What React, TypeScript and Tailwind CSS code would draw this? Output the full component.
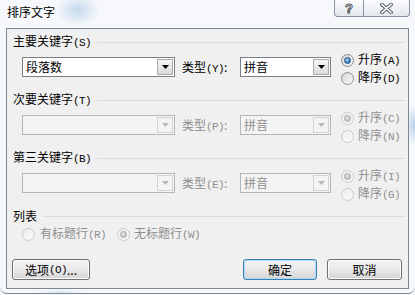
import React from "react";

const K = ({ k }: { k: string }) => (
  <span className="font-['Liberation_Mono',monospace] text-[11px] tracking-[-0.6px]">({k})</span>
);

function Radio({ checked, disabled }: { checked?: boolean; disabled?: boolean }) {
  return (
    <span
      className={
        disabled
          ? "flex h-[13px] w-[13px] shrink-0 items-center justify-center rounded-full border border-[#c9cbcd] bg-linear-to-br from-[#ececec] to-[#fbfbfb]"
          : "flex h-[13px] w-[13px] shrink-0 items-center justify-center rounded-full border border-[#8e8f8f] bg-linear-to-br from-[#d4d4d4] to-[#fcfcfc]"
      }
    >
      {checked && (
        <span
          className={
            disabled
              ? "h-[7px] w-[7px] rounded-full border border-[#a2a4a6] bg-[radial-gradient(circle_at_40%_35%,#e6e6e6,#b4b6b8)]"
              : "h-[7px] w-[7px] rounded-full border border-[#1d4f80] bg-[radial-gradient(circle_at_40%_35%,#b8e0f8,#3b82c4_60%,#1f5a92)]"
          }
        />
      )}
    </span>
  );
}

function Combo({ width, text, disabled }: { width: string; text: string; disabled?: boolean }) {
  return (
    <div
      className={
        (disabled
          ? "border-[#b4b7ba] bg-[#f4f4f4] text-[#8f8f8f] "
          : "border-[#7a7e84] bg-white text-black ") +
        "flex h-[20px] shrink-0 items-stretch border " +
        width
      }
    >
      <div className="flex-1 pl-[3px] text-[12px] leading-[18px]">{text}</div>
      <div
        className={
          disabled
            ? "m-[1px] flex w-[16px] items-center justify-center border border-[#d2d4d6] bg-[#f4f4f4]"
            : "m-[1px] flex w-[16px] items-center justify-center border border-[#a9abad] bg-linear-to-b from-[#f6f6f6] to-[#dadada]"
        }
      >
        <svg width="7" height="4" viewBox="0 0 7 4">
          <path d="M0 0H7L3.5 4Z" fill={disabled ? "#b8b8b8" : "#000"} />
        </svg>
      </div>
    </div>
  );
}

function Header({ children }: { children: React.ReactNode }) {
  return (
    <div className="flex h-[16px] items-center text-[12px] leading-[16px] text-black">
      <span>{children}</span>
      <div className="ml-[6px] h-px flex-1 bg-[#d9dde1]" />
    </div>
  );
}

const sections = [
  { title: "主要关键字", key: "S", combo: "段落数", typeKey: "Y", enabled: true, asc: "A", desc: "D" },
  { title: "次要关键字", key: "T", combo: "", typeKey: "P", enabled: false, asc: "C", desc: "N" },
  { title: "第三关键字", key: "B", combo: "", typeKey: "E", enabled: false, asc: "I", desc: "G" },
];

function Button({ children, def, width }: { children: React.ReactNode; def?: boolean; width: string }) {
  return (
    <div
      className={
        (def
          ? "border-[#3c7fb1] shadow-[inset_0_0_0_1px_#a8dcf5] "
          : "border-[#707070] shadow-[inset_0_0_0_1px_#fbfbfb] ") +
        "flex h-[21px] items-center justify-center rounded-[3px] border bg-linear-to-b from-[#f3f3f3] via-[#e9e9e9] to-[#d4d4d4] text-[12px] leading-[16px] text-black " +
        width
      }
    >
      {children}
    </div>
  );
}

export default function App() {
  return (
    <div className="h-[295px] w-[415px] overflow-hidden bg-[#f6f8fb]">
      <div className="h-[294px] w-[415px] overflow-hidden rounded-b-[7px] border-b border-[#7d8a97] font-['Noto_Sans_CJK_SC','Noto_Sans',sans-serif] [background:radial-gradient(ellipse_22px_16px_at_78px_10px,#c6d9ee,transparent),radial-gradient(ellipse_10px_20px_at_415px_125px,#b8cfe9,transparent),radial-gradient(ellipse_30px_6px_at_60px_295px,#c6d9ee,transparent),#f6f8fb]">
        <div className="flex h-[28px] items-start justify-between">
          <div className="pl-[7px] pt-[4px] text-[12px] leading-[16px] text-black">排序文字</div>
          <div className="mr-[5px] flex h-[17px] rounded-b-[4px] border border-t-0 border-[#8794a3] bg-linear-to-b from-[#fbfcfd] to-[#e3e8ee]">
            <div className="flex w-[28px] items-center justify-center font-['Liberation_Sans',sans-serif] text-[13px] font-bold leading-[13px] text-white [-webkit-text-stroke:1px_#5a5f66]">
              ?
            </div>
            <div className="flex w-[46px] items-center justify-center border-l border-[#8794a3]">
              <svg width="13" height="11" viewBox="0 0 13 11">
                <path d="M2 1.5L11 9.5M11 1.5L2 9.5" stroke="#5a5f66" strokeWidth="3.6" strokeLinecap="square" />
                <path d="M2 1.5L11 9.5M11 1.5L2 9.5" stroke="#ffffff" strokeWidth="1.6" strokeLinecap="square" />
              </svg>
            </div>
          </div>
        </div>
        <div className="mx-[6px] flex h-[261px] flex-col border border-[#7c8792] bg-[#f0f0f0] pl-[6px] pr-[3px] pt-[5px]">
          {sections.map((s) => (
            <div key={s.key} className="flex h-[58px] flex-col">
              <Header>
                {s.title}
                <K k={s.key} />
              </Header>
              <div className="flex items-start">
                <div className="ml-[9px] mt-[7px]">
                  <Combo width="w-[153px]" text={s.combo} disabled={!s.enabled} />
                </div>
                <div
                  className={
                    (s.enabled ? "text-black " : "text-[#8f8f8f] ") +
                    "ml-[7px] mt-[9px] w-[58px] shrink-0 text-[12px] leading-[16px]"
                  }
                >
                  类型<K k={s.typeKey} />:
                </div>
                <div className="mt-[7px]">
                  <Combo width="w-[91px]" text="拼音" disabled={!s.enabled} />
                </div>
                <div className="ml-[10px] mt-[1px] flex flex-col">
                  <div className="flex h-[18px] items-center gap-[4px]">
                    <Radio checked disabled={!s.enabled} />
                    <span className={(s.enabled ? "text-black " : "text-[#8f8f8f] ") + "text-[12px] leading-[16px]"}>
                      升序<K k={s.asc} />
                    </span>
                  </div>
                  <div className="flex h-[18px] items-center gap-[4px]">
                    <Radio disabled={!s.enabled} />
                    <span className={(s.enabled ? "text-black " : "text-[#8f8f8f] ") + "text-[12px] leading-[16px]"}>
                      降序<K k={s.desc} />
                    </span>
                  </div>
                </div>
              </div>
            </div>
          ))}
          <Header>列表</Header>
          <div className="ml-[9px] mt-[2px] flex h-[16px] items-center text-[12px] leading-[16px] text-[#8f8f8f]">
            <div className="flex w-[95px] items-center gap-[5px]">
              <Radio disabled />
              <span>
                有标题行<K k="R" />
              </span>
            </div>
            <div className="flex items-center gap-[4px]">
              <Radio checked disabled />
              <span>
                无标题行<K k="W" />
              </span>
            </div>
          </div>
          <div className="mt-[17px] flex items-center">
            <div className="ml-[-1px]">
              <Button width="w-[78px]">
                选项<K k="O" />...
              </Button>
            </div>
            <div className="flex-1" />
            <Button def width="w-[74px]">
              确定
            </Button>
            <div className="ml-[10px] mr-[3px]">
              <Button width="w-[75px]">取消</Button>
            </div>
          </div>
        </div>
      </div>
    </div>
  );
}
